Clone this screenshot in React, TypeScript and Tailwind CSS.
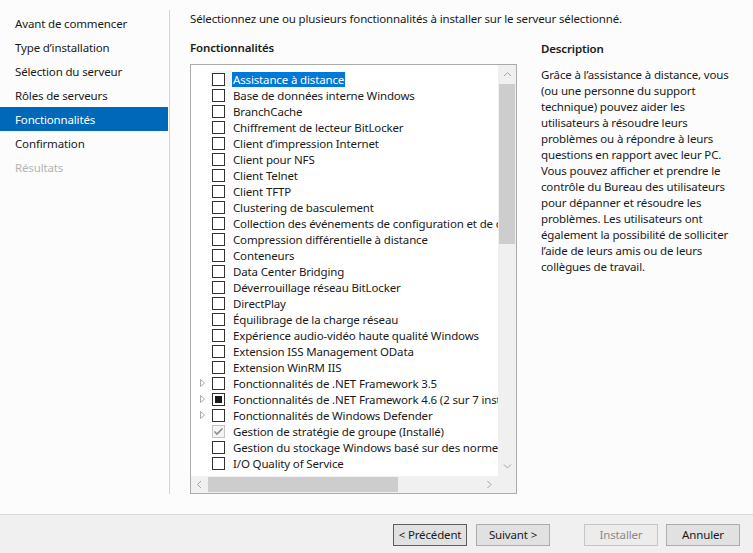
// @ts-nocheck
import React from 'react'

const steps = [
  { label: 'Avant de commencer' },
  { label: "Type d’installation" },
  { label: 'Sélection du serveur' },
  { label: 'Rôles de serveurs' },
  { label: 'Fonctionnalités', active: true },
  { label: 'Confirmation' },
  { label: 'Résultats', disabled: true },
]

const features = [
  { name: 'Assistance à distance', selected: true },
  { name: 'Base de données interne Windows' },
  { name: 'BranchCache' },
  { name: 'Chiffrement de lecteur BitLocker' },
  { name: 'Client d’impression Internet' },
  { name: 'Client pour NFS' },
  { name: 'Client Telnet' },
  { name: 'Client TFTP' },
  { name: 'Clustering de basculement' },
  { name: 'Collection des événements de configuration et de démarrage' },
  { name: 'Compression différentielle à distance' },
  { name: 'Conteneurs' },
  { name: 'Data Center Bridging' },
  { name: 'Déverrouillage réseau BitLocker' },
  { name: 'DirectPlay' },
  { name: 'Équilibrage de la charge réseau' },
  { name: 'Expérience audio-vidéo haute qualité Windows' },
  { name: 'Extension ISS Management OData' },
  { name: 'Extension WinRM IIS' },
  { name: 'Fonctionnalités de .NET Framework 3.5', expand: true },
  { name: 'Fonctionnalités de .NET Framework 4.6 (2 sur 7 installé(s))', expand: true, state: 'partial' },
  { name: 'Fonctionnalités de Windows Defender', expand: true },
  { name: 'Gestion de stratégie de groupe (Installé)', state: 'installed' },
  { name: 'Gestion du stockage Windows basé sur des normes' },
  { name: 'I/O Quality of Service' },
]

const descLines = [
  'Grâce à l’assistance à distance, vous',
  '(ou une personne du support',
  'technique) pouvez aider les',
  'utilisateurs à résoudre leurs',
  'problèmes ou à répondre à leurs',
  'questions en rapport avec leur PC.',
  'Vous pouvez afficher et prendre le',
  'contrôle du Bureau des utilisateurs',
  'pour dépanner et résoudre les',
  'problèmes. Les utilisateurs ont',
  'également la possibilité de solliciter',
  'l’aide de leurs amis ou de leurs',
  'collègues de travail.',
]

function Check({ state }) {
  if (state === 'installed') {
    return (
      <span className="w-[13px] h-[13px] border border-[#c4c4c4] bg-[#f4f4f4] flex items-center justify-center shrink-0">
        <svg width="11" height="11" viewBox="0 0 11 11">
          <path d="M1.5 5.5 L4 8 L9.5 2.5" fill="none" stroke="#8c8c8c" strokeWidth="1.6" />
        </svg>
      </span>
    )
  }
  return (
    <span className="w-[13px] h-[13px] border border-[#333333] bg-white flex items-center justify-center shrink-0">
      {state === 'partial' && <span className="w-[7px] h-[7px] bg-[#1a1a1a]" />}
    </span>
  )
}

function Arrow({ dir }) {
  const paths = {
    up: 'M1 5 L4.5 1.5 L8 5',
    down: 'M1 1.5 L4.5 5 L8 1.5',
    left: 'M5 1 L1.5 4.5 L5 8',
    right: 'M1.5 1 L5 4.5 L1.5 8',
  }
  const vert = dir === 'up' || dir === 'down'
  return (
    <svg width={vert ? 9 : 7} height={vert ? 7 : 9} viewBox={vert ? '0 0 9 7' : '0 0 7 9'}>
      <path d={paths[dir]} fill="none" stroke="#a3a3a3" strokeWidth="1" />
    </svg>
  )
}

function Btn({ children, focused, disabled }) {
  return (
    <button
      className={`w-[74px] h-[22px] leading-none border ${
        disabled
          ? 'bg-[#ececec] border-[#c6c6c6] text-[#8a8a8a]'
          : focused
          ? 'bg-[#e1e1e1] border-[#5e5e5e] text-[#1a1a1a]'
          : 'bg-[#e1e1e1] border-[#adadad] text-[#1a1a1a]'
      }`}
    >
      {children}
    </button>
  )
}

export default function App() {
  return (
    <div
      className="w-[753px] h-[553px] bg-[#fcfcfc] flex flex-col text-[11.5px] tracking-[-0.15px] text-[#1a1a1a] overflow-hidden"
      style={{ fontFamily: '"Segoe UI", "Noto Sans", "Open Sans", sans-serif' }}
    >
      {/* corps */}
      <div className="flex-1 flex min-h-0">
        {/* étapes */}
        <div className="w-[170px] shrink-0 pt-[10px] pb-[20px]">
          <div className="h-full border-r border-[#d4d4d4] pt-px">
            {steps.map((s) => (
              <div
                key={s.label}
                className={`h-[24px] w-[168px] flex items-center pl-[15px] pt-px ${
                  s.active ? 'bg-[#0068b8] text-white' : s.disabled ? 'text-[#b4b4b4]' : 'text-[#1a1a1a]'
                }`}
              >
                {s.label}
              </div>
            ))}
          </div>
        </div>

        {/* contenu */}
        <div className="flex-1 pl-[20px] pt-[11px] pb-[20px] flex flex-col min-w-0">
          <div className="h-[16px] leading-[16px] whitespace-nowrap">
            Sélectionnez une ou plusieurs fonctionnalités à installer sur le serveur sélectionné.
          </div>
          <div className="flex flex-1 min-h-0 mt-[14px]">
            {/* liste */}
            <div className="w-[327px] flex flex-col">
              <div className="h-[16px] leading-[14px] font-semibold">Fonctionnalités</div>
              <div className="mt-[7px] flex-1 border border-[#ababab] bg-white flex flex-col min-h-0">
                <div className="flex flex-1 min-h-0">
                  <div className="flex-1 pt-[6px] overflow-hidden">
                    {features.map((f) => (
                      <div key={f.name} className="h-[16px] flex items-center whitespace-nowrap">
                        <span className="w-[20px] pl-[9px] flex items-center shrink-0">
                          {f.expand && (
                            <svg width="5" height="8" viewBox="0 0 5 8">
                              <path d="M0.5 0.5 L4.5 4 L0.5 7.5 Z" fill="none" stroke="#a8a8a8" strokeWidth="1" />
                            </svg>
                          )}
                        </span>
                        <span
                          className={`h-[16px] flex items-center pl-[1px] pr-[7px] ${
                            f.selected ? 'bg-[#f3f3f3]' : ''
                          }`}
                        >
                          <Check state={f.state} />
                        </span>
                        <span
                          className={`h-[15px] leading-[15px] px-[1px] ${
                            f.selected ? 'bg-[#0078d7] text-white' : ''
                          }`}
                        >
                          {f.name}
                        </span>
                      </div>
                    ))}
                  </div>
                  {/* barre verticale */}
                  <div className="w-[18px] shrink-0 bg-[#f0f0f0] flex flex-col">
                    <div className="h-[19px] flex items-center justify-center">
                      <Arrow dir="up" />
                    </div>
                    <div className="h-[160px] mx-px bg-[#cdcdcd]" />
                    <div className="flex-1" />
                    <div className="h-[19px] flex items-center justify-center">
                      <Arrow dir="down" />
                    </div>
                  </div>
                </div>
                {/* barre horizontale */}
                <div className="h-[17px] flex shrink-0">
                  <div className="flex-1 bg-[#f0f0f0] flex items-center">
                    <div className="w-[17px] flex items-center justify-center">
                      <Arrow dir="left" />
                    </div>
                    <div className="w-[190px] h-[15px] bg-[#cdcdcd]" />
                    <div className="flex-1" />
                    <div className="w-[17px] flex items-center justify-center">
                      <Arrow dir="right" />
                    </div>
                  </div>
                  <div className="w-[18px] bg-[#f0f0f0]" />
                </div>
              </div>
            </div>

            {/* description */}
            <div className="ml-[24px] flex flex-col">
              <div className="h-[16px] leading-[16px] font-semibold">Description</div>
              <div className="mt-[10px] leading-[16px]">
                {descLines.map((l) => (
                  <div key={l} className="whitespace-nowrap">{l}</div>
                ))}
              </div>
            </div>
          </div>
        </div>
      </div>

      {/* boutons */}
      <div className="h-[39px] shrink-0 border-t border-[#d8d8d8] bg-[#f0f0f0] flex items-center pr-[13px] pt-px">
        <div className="flex-1" />
        <Btn focused>&lt; Précédent</Btn>
        <div className="w-[9px]" />
        <Btn>Suivant &gt;</Btn>
        <div className="w-[34px]" />
        <Btn disabled>Installer</Btn>
        <div className="w-[8px]" />
        <Btn>Annuler</Btn>
      </div>
    </div>
  )
}
